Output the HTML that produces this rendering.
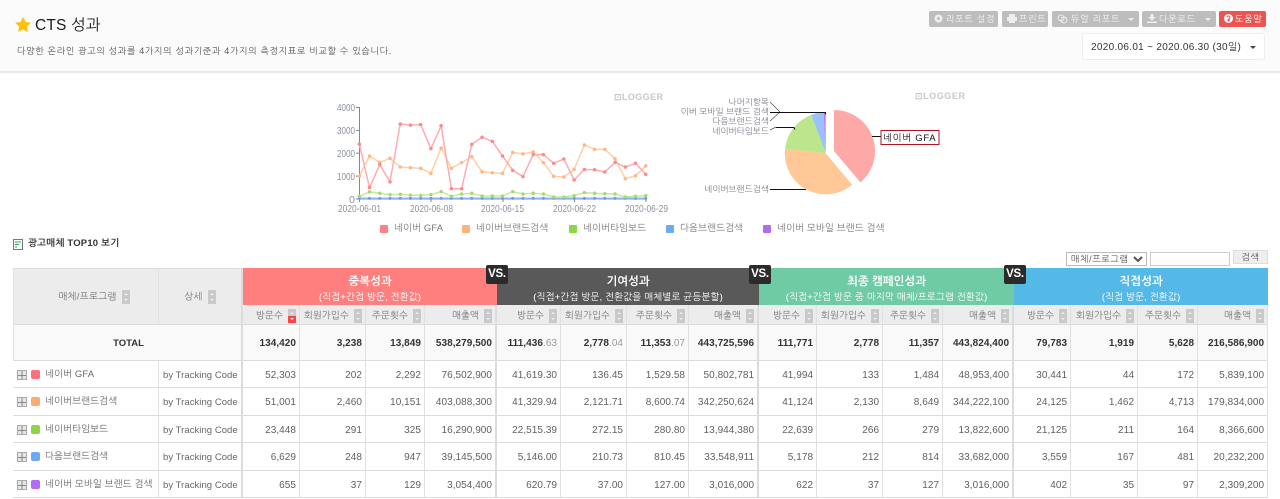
<!DOCTYPE html>
<html lang="ko"><head><meta charset="utf-8"><title>CTS 성과</title>
<style>
html,body{margin:0;padding:0;background:#fff}
body{width:1280px;height:499px;overflow:hidden;position:relative;font-family:"Liberation Sans","NanumGothic","Noto Sans CJK KR",sans-serif;color:#444;font-size:10px}
.a{position:absolute;white-space:nowrap}
#top{left:0;top:0;width:1280px;height:71px;background:#fbfbfb;border-bottom:2px solid #e9e9e9}
.btn{position:absolute;top:11px;height:16px;line-height:16px;background:#bdbdbd;color:#f4f4f4;border-radius:2px;font-size:9px;letter-spacing:.75px;box-sizing:border-box;white-space:nowrap}
.btn svg{position:absolute;left:5px;top:3px}
.btn span{position:absolute;top:0}
.btn em{position:absolute;right:5px;top:7px;border:3px solid transparent;border-top-color:#eee;border-bottom:0}
table{position:absolute;left:13px;top:268px;border-collapse:separate;border-spacing:0;table-layout:fixed;width:1255px}
td,th{box-sizing:border-box;border-right:1px solid #e0e0e0;border-bottom:1px solid #dcdcdc;text-align:right;padding:2px 3px 0 0;overflow:hidden;white-space:nowrap;font-size:10px;font-weight:normal;letter-spacing:.05px;color:#5f5f5f}
.g{border-right:2px solid #dcdcdc}
.hd{background:#ececec;color:#777;text-align:center;padding:1px 0 0}
.sub{background:#ececec;color:#777;padding:2px 3px 0 0;font-size:9.5px;letter-spacing:.1px;height:20px}
.grp{color:#fff;text-align:center;padding:7px 0 0;vertical-align:top;font-weight:bold;font-size:11.5px;line-height:15px;border:0;letter-spacing:0}
.grp small{display:block;font-size:9.5px;font-weight:normal;line-height:12px;margin-top:2px;letter-spacing:.15px}
.tot td{background:#f9f9f9;font-weight:bold;color:#333;font-size:10px}
.tot td s{text-decoration:none;font-weight:normal;color:#999}
.s{display:inline-block;width:8px;height:14px;background:#c9c9c9;vertical-align:middle;margin-left:5px;position:relative}
.s:before{content:"";position:absolute;left:2px;top:3px;border:2px solid transparent;border-bottom:2px solid #eee;border-top:0}
.s:after{content:"";position:absolute;left:2px;bottom:3px;border:2px solid transparent;border-top:2px solid #eee;border-bottom:0}
.s.r{background:linear-gradient(#c9c9c9 50%,#f44 50%)}
.nm{text-align:left;padding:0;position:relative;letter-spacing:.1px;color:#666;font-size:9.5px}
.nm i{position:absolute;left:4px;top:9px;width:8px;height:8px;border:1px solid #aaa;background:linear-gradient(90deg,#e6e6e6 3.5px,#888 3.5px,#888 4.5px,#e6e6e6 4.5px)}
.nm i:after{content:"";position:absolute;left:0;right:0;top:3.5px;height:1px;background:#888}
.nm b{position:absolute;left:18px;top:9px;width:9px;height:9px;border-radius:2px}
.nm span{position:absolute;left:32px;top:8px}
.tc{text-align:left;padding-left:4px;color:#666;font-size:9.5px;letter-spacing:.05px}
.vs{position:absolute;top:265px;width:22px;height:19px;background:#2b2b2b;border-radius:2px;color:#fff;font-weight:bold;font-size:11.5px;line-height:19px;text-align:center;letter-spacing:-.3px}
.lg{position:absolute;top:223px;height:12px;line-height:12px;color:#777;font-size:9.5px;letter-spacing:.1px;white-space:nowrap}
.lg b{position:absolute;left:-14px;top:2px;width:8px;height:8px;border-radius:1px}
svg text{font-family:"Liberation Sans","NanumGothic",sans-serif}
</style></head><body>
<div class="a" id="top"></div>
<svg class="a" style="left:15px;top:17px" width="16" height="15" viewBox="0 0 24 23"><path d="M12 0l3.7 7.6 8.3 1.2-6 5.8 1.4 8.4L12 18.900l-7.400 4.100L6 14.600 0 8.800l8.300-1.200z" fill="#ffc107"/></svg>
<div class="a" style="left:35px;top:17px;font-size:15.500px;line-height:18px;color:#1a1a1a;letter-spacing:.2px">CTS 성과</div>
<div class="a" style="left:17px;top:45px;font-size:9px;line-height:12px;color:#555;letter-spacing:.67px">다양한 온라인 광고의 성과를 4가지의 성과기준과 4가지의 측정지표로 비교할 수 있습니다.</div>

<div class="btn" style="left:929px;width:69px"><svg width="9" height="9"><circle cx="4.500" cy="4.500" r="4" fill="#eee"/><circle cx="4.500" cy="4.500" r="1.500" fill="#bdbdbd"/></svg><span style="left:17px">리포트 설정</span></div>
<div class="btn" style="left:1002px;width:46px"><svg width="10" height="9"><path d="M2 0h6v3h2v4H8v2H2V7H0V3h2z" fill="#eee"/></svg><span style="left:17px">프린트</span></div>
<div class="btn" style="left:1052px;width:87px"><svg width="11" height="10"><circle cx="4" cy="4" r="3" fill="none" stroke="#eee"/><circle cx="7" cy="6" r="3" fill="none" stroke="#eee"/></svg><span style="left:19px">듀얼 리포트</span><em></em></div>
<div class="btn" style="left:1142px;width:74px"><svg width="10" height="9"><path d="M3.500 0h3v3H9L5 6.500 1 3h2.500zM0 7.500h10V9H0z" fill="#eee"/></svg><span style="left:17px">다운로드</span><em></em></div>
<div class="btn" style="left:1219px;width:47px;background:#ef5350;color:#fff"><svg width="9" height="9"><circle cx="4.500" cy="4.500" r="4.500" fill="#fff"/><path d="M4 5.500h1.200V7H4zM3 3.500a1.500 1.500 0 1 1 2.200 1.300v.5H4" fill="none" stroke="#ef5350"/></svg><span style="left:16px">도움말</span></div>
<div class="a" style="left:1082px;top:33px;width:183px;height:27px;box-sizing:border-box;background:#fff;border:1px solid #eee;border-radius:3px;color:#333;font-size:10px;line-height:27px;padding-left:8px;letter-spacing:.3px">2020.06.01 ~ 2020.06.30 (30일)<em style="position:absolute;right:8px;top:12px;border:3px solid transparent;border-top-color:#444;border-bottom:0"></em></div>

<svg class="a" style="left:0;top:85px" width="1000" height="130" viewBox="0 85 1000 130">
<defs><clipPath id="c"><rect x="680" y="85" width="100" height="40"/></clipPath></defs>
<text x="614" y="100" font-size="9" font-weight="bold" fill="#c8c8c8" textLength="49">⊡LOGGER</text>
<text x="915" y="99" font-size="9" font-weight="bold" fill="#c8c8c8" textLength="50">⊡LOGGER</text>
<g fill="#8c929c" font-size="10" text-anchor="end">
<text x="355" y="111" textLength="18" lengthAdjust="spacingAndGlyphs">4000</text>
<text x="355" y="134" textLength="18" lengthAdjust="spacingAndGlyphs">3000</text>
<text x="355" y="157" textLength="18" lengthAdjust="spacingAndGlyphs">2000</text>
<text x="355" y="180" textLength="18" lengthAdjust="spacingAndGlyphs">1000</text>
<text x="355" y="203" textLength="6" lengthAdjust="spacingAndGlyphs">0</text>
</g>
<g fill="#8c929c" font-size="10.500">
<text x="338" y="212" textLength="43" lengthAdjust="spacingAndGlyphs">2020-06-01</text>
<text x="410" y="212" textLength="43" lengthAdjust="spacingAndGlyphs">2020-06-08</text>
<text x="481" y="212" textLength="43" lengthAdjust="spacingAndGlyphs">2020-06-15</text>
<text x="553" y="212" textLength="43" lengthAdjust="spacingAndGlyphs">2020-06-22</text>
<text x="625" y="212" textLength="43" lengthAdjust="spacingAndGlyphs">2020-06-29</text>
</g>
<path d="M359.500 107v92M356 107.500h3.500M356 130.400h3.500M356 153.300h3.500M356 176.100h3.500M356 199h291M359.500 199v3M431 199v3M503 199v3M574.500 199v3M646 199v3" stroke="#7f8894" fill="none"/>
<g transform="translate(359.300 199) scale(10.230 -0.02288)" fill="none" stroke-linejoin="round" stroke-linecap="round">
<path vector-effect="non-scaling-stroke" stroke="#a78bfa" stroke-width="1.200" d="M0 20H28"/>
<path vector-effect="non-scaling-stroke" stroke="#8fb4f5" stroke-width="1.600" d="M0 30H28"/>
<path vector-effect="non-scaling-stroke" stroke="#6d97ea" stroke-width="3" d="M0 30h0M1 30h0M2 30h0M3 30h0M4 30h0M5 30h0M6 30h0M7 30h0M8 30h0M9 30h0M10 30h0M11 30h0M12 30h0M13 30h0M14 30h0M15 30h0M16 30h0M17 30h0M18 30h0M19 30h0M20 30h0M21 30h0M22 30h0M23 30h0M24 30h0M25 30h0M26 30h0M27 30h0M28 30h0"/>
<path vector-effect="non-scaling-stroke" stroke="#c6e8a0" stroke-width="1.500" d="M0 120L1 310 2 250 3 190 4 210 5 170 6 160 7 190 8 320 9 120 10 220 11 250 12 130 13 130 14 130 15 320 16 220 17 250 18 220 19 90 20 80 21 150 22 280 23 250 24 230 25 220 26 90 27 120 28 150"/>
<path vector-effect="non-scaling-stroke" stroke="#a4dd6a" stroke-width="3.500" d="M0 120h0M1 310h0M2 250h0M3 190h0M4 210h0M5 170h0M6 160h0M7 190h0M8 320h0M9 120h0M10 220h0M11 250h0M12 130h0M13 130h0M14 130h0M15 320h0M16 220h0M17 250h0M18 220h0M19 90h0M20 80h0M21 150h0M22 280h0M23 250h0M24 230h0M25 220h0M26 90h0M27 120h0M28 150h0"/>
<path vector-effect="non-scaling-stroke" stroke="#ffcfa6" stroke-width="1.500" d="M0 1000L1 1880 2 1600 3 1780 4 1400 5 1370 6 1340 7 1120 8 2230 9 1340 10 1590 11 1850 12 1190 13 1150 14 1120 15 2040 16 1970 17 2060 18 1590 19 990 20 960 21 1300 22 2360 23 2170 24 2170 25 1760 26 880 27 1020 28 1440"/>
<path vector-effect="non-scaling-stroke" stroke="#ffb783" stroke-width="3.500" d="M0 1000h0M1 1880h0M2 1600h0M3 1780h0M4 1400h0M5 1370h0M6 1340h0M7 1120h0M8 2230h0M9 1340h0M10 1590h0M11 1850h0M12 1190h0M13 1150h0M14 1120h0M15 2040h0M16 1970h0M17 2060h0M18 1590h0M19 990h0M20 960h0M21 1300h0M22 2360h0M23 2170h0M24 2170h0M25 1760h0M26 880h0M27 1020h0M28 1440h0"/>
<path vector-effect="non-scaling-stroke" stroke="#ffacb0" stroke-width="1.500" d="M0 2400L1 500 2 1500 3 750 4 3280 5 3230 6 3250 7 2200 8 3200 9 450 10 450 11 2390 12 2700 13 2520 14 1880 15 1250 16 980 17 1940 18 1940 19 1560 20 1750 21 830 22 1290 23 1280 24 1180 25 1600 26 1400 27 1560 28 1080"/>
<path vector-effect="non-scaling-stroke" stroke="#fb8a90" stroke-width="3.500" d="M0 2400h0M1 500h0M2 1500h0M3 750h0M4 3280h0M5 3230h0M6 3250h0M7 2200h0M8 3200h0M9 450h0M10 450h0M11 2390h0M12 2700h0M13 2520h0M14 1880h0M15 1250h0M16 980h0M17 1940h0M18 1940h0M19 1560h0M20 1750h0M21 830h0M22 1290h0M23 1280h0M24 1180h0M25 1600h0M26 1400h0M27 1560h0M28 1080h0"/>
</g>
<path d="M834 151V110A41 41 0 0 1 860.400 182.400Z" fill="#ffa8a8"/>
<path d="M825.700 153.300L852.100 184.700A41 41 0 0 1 785 148.600Z" fill="#ffc896"/>
<path d="M825.700 153.300L785 148.600A41 41 0 0 1 811.300 114.900Z" fill="#bce68c"/>
<path d="M825.700 153.300L811.300 114.900A41 41 0 0 1 823.600 112.400Z" fill="#99c2fc"/>
<path d="M825.700 153.300L823.600 112.400A41 41 0 0 1 825.700 112.300Z" fill="#b97aff"/>
<path d="M770 102l10 10M770 121l10-9M770 130l6-3" stroke="#555" fill="none" stroke-width=".8"/>
<path d="M770 112.500h55.500v2M776 127.500h18l1 2M770 189.500h36M872 136.500h9" stroke="#111" fill="none"/>
<g fill="#7b7f88" font-size="8.500" text-anchor="end" letter-spacing=".1">
<text x="769" y="105">나머지항목</text>
<text x="769" y="114.500" clip-path="url(#c)">네이버 모바일 브랜드 검색</text>
<text x="769" y="124">다음브랜드검색</text>
<text x="769" y="134">네이버타임보드</text>
<text x="769" y="192">네이버브랜드검색</text>
</g>
<rect x="881" y="130.500" width="58" height="14" fill="#fff" stroke="#b01324"/>
<text x="883" y="141" font-size="9.500" fill="#111" letter-spacing=".7">네이버 GFA</text>
</svg>

<div class="lg" style="left:394px"><b style="background:#ff7f85"></b>네이버 GFA</div>
<div class="lg" style="left:476px"><b style="background:#ffb27a"></b>네이버브랜드검색</div>
<div class="lg" style="left:583px"><b style="background:#8ed645"></b>네이버타임보드</div>
<div class="lg" style="left:680px"><b style="background:#6ea8fb"></b>다음브랜드검색</div>
<div class="lg" style="left:777px"><b style="background:#b36bf5"></b>네이버 모바일 브랜드 검색</div>

<svg class="a" style="left:13px;top:239px" width="10" height="11"><rect x=".5" y=".5" width="9" height="10" fill="#fafafa" stroke="#777"/><path d="M2 3h6M2 5.500h4M2 8h2" stroke="#3aa655"/></svg>
<div class="a" style="left:28px;top:238px;font-size:9.500px;line-height:12px;font-weight:bold;color:#333;letter-spacing:.2px">광고매체 TOP10 보기</div>

<select class="a" style="left:1066px;top:252px;width:81px;height:14px;font-size:9px;padding:0;color:#555;background:#fff;border:1px solid #bbb;font-family:inherit;letter-spacing:.6px"><option>매체/프로그램</option></select>
<div class="a" style="left:1150px;top:252px;width:80px;height:14px;box-sizing:border-box;border:1px solid #ccc;background:#fff"></div>
<div class="a" style="left:1233px;top:250px;width:35px;height:14px;background:#eee;border:1px solid #ddd;box-sizing:border-box;text-align:center;font-size:9px;line-height:12px;color:#555;letter-spacing:.6px">검색</div>

<table>
<colgroup><col style="width:146px"><col style="width:84px"><col style="width:57px"><col style="width:66px"><col style="width:59px"><col style="width:72px"><col style="width:64px"><col style="width:66px"><col style="width:62px"><col style="width:70px"><col style="width:58px"><col style="width:66px"><col style="width:60px"><col style="width:71px"><col style="width:57px"><col style="width:67px"><col style="width:60px"><col style="width:70px"></colgroup>
<tr style="height:37px">
<th rowspan="2" class="hd" style="border-left:1px solid #e0e0e0;border-top:1px solid #ddd;padding-left:16px;letter-spacing:.3px;font-size:9.500px">매체/프로그램<i class="s"></i></th>
<th rowspan="2" class="hd g" style="border-top:1px solid #ddd;letter-spacing:.3px;font-size:9.500px">상세<i class="s"></i></th>
<th colspan="4" class="grp" style="background:#ff7f7f;color:#fff">중복성과<small>(직접+간접 방문, 전환값)</small></th>
<th colspan="4" class="grp" style="background:#595959;color:#fff">기여성과<small>(직접+간접 방문, 전환값을 매체별로 균등분할)</small></th>
<th colspan="4" class="grp" style="background:#6fcba3;color:#fff">최종 캠페인성과<small>(직접+간접 방문 중 마지막 매체/프로그램 전환값)</small></th>
<th colspan="4" class="grp" style="background:#55b9e7;color:#fff">직접성과<small>(직접 방문, 전환값)</small></th>
</tr>
<tr>
<th class="sub">방문수<i class="s r"></i></th><th class="sub">회원가입수<i class="s"></i></th><th class="sub">주문횟수<i class="s"></i></th><th class="sub g">매출액<i class="s"></i></th>
<th class="sub">방문수<i class="s"></i></th><th class="sub">회원가입수<i class="s"></i></th><th class="sub">주문횟수<i class="s"></i></th><th class="sub g">매출액<i class="s"></i></th>
<th class="sub">방문수<i class="s"></i></th><th class="sub">회원가입수<i class="s"></i></th><th class="sub">주문횟수<i class="s"></i></th><th class="sub g">매출액<i class="s"></i></th>
<th class="sub">방문수<i class="s"></i></th><th class="sub">회원가입수<i class="s"></i></th><th class="sub">주문횟수<i class="s"></i></th><th class="sub">매출액<i class="s"></i></th>
</tr>
<tr class="tot" style="height:36px">
<td colspan="2" class="g" style="text-align:center;padding:2px 0 0 2px;border-left:1px solid #e0e0e0;font-size:9.500px;letter-spacing:0">TOTAL</td>
<td>134,420</td><td>3,238</td><td>13,849</td><td class="g">538,279,500</td>
<td>111,436<s>.63</s></td><td>2,778<s>.04</s></td><td>11,353<s>.07</s></td><td class="g">443,725,596</td>
<td>111,771</td><td>2,778</td><td>11,357</td><td class="g">443,824,400</td>
<td>79,783</td><td>1,919</td><td>5,628</td><td>216,586,900</td>
</tr>
<tr style="height:27px"><td class="nm"><i></i><b style="background:#ff7078"></b><span>네이버 GFA</span></td><td class="tc g">by Tracking Code</td>
<td>52,303</td><td>202</td><td>2,292</td><td class="g">76,502,900</td><td>41,619.30</td><td>136.45</td><td>1,529.58</td><td class="g">50,802,781</td><td>41,994</td><td>133</td><td>1,484</td><td class="g">48,953,400</td><td>30,441</td><td>44</td><td>172</td><td>5,839,100</td></tr>
<tr style="height:28px"><td class="nm"><i></i><b style="background:#ffaa6e"></b><span>네이버브랜드검색</span></td><td class="tc g">by Tracking Code</td>
<td>51,001</td><td>2,460</td><td>10,151</td><td class="g">403,088,300</td><td>41,329.94</td><td>2,121.71</td><td>8,600.74</td><td class="g">342,250,624</td><td>41,124</td><td>2,130</td><td>8,649</td><td class="g">344,222,100</td><td>24,125</td><td>1,462</td><td>4,713</td><td>179,834,000</td></tr>
<tr style="height:27px"><td class="nm"><i></i><b style="background:#8ed645"></b><span>네이버타임보드</span></td><td class="tc g">by Tracking Code</td>
<td>23,448</td><td>291</td><td>325</td><td class="g">16,290,900</td><td>22,515.39</td><td>272.15</td><td>280.80</td><td class="g">13,944,380</td><td>22,639</td><td>266</td><td>279</td><td class="g">13,822,600</td><td>21,125</td><td>211</td><td>164</td><td>8,366,600</td></tr>
<tr style="height:28px"><td class="nm"><i></i><b style="background:#6ea8fb"></b><span>다음브랜드검색</span></td><td class="tc g">by Tracking Code</td>
<td>6,629</td><td>248</td><td>947</td><td class="g">39,145,500</td><td>5,146.00</td><td>210.73</td><td>810.45</td><td class="g">33,548,911</td><td>5,178</td><td>212</td><td>814</td><td class="g">33,682,000</td><td>3,559</td><td>167</td><td>481</td><td>20,232,200</td></tr>
<tr style="height:27px"><td class="nm"><i></i><b style="background:#b36bf5"></b><span>네이버 모바일 브랜드 검색</span></td><td class="tc g">by Tracking Code</td>
<td>655</td><td>37</td><td>129</td><td class="g">3,054,400</td><td>620.79</td><td>37.00</td><td>127.00</td><td class="g">3,016,000</td><td>622</td><td>37</td><td>127</td><td class="g">3,016,000</td><td>402</td><td>35</td><td>97</td><td>2,309,200</td></tr>
</table>
<div class="vs" style="left:486px">VS.</div>
<div class="vs" style="left:749px">VS.</div>
<div class="vs" style="left:1004px">VS.</div>
</body></html>
